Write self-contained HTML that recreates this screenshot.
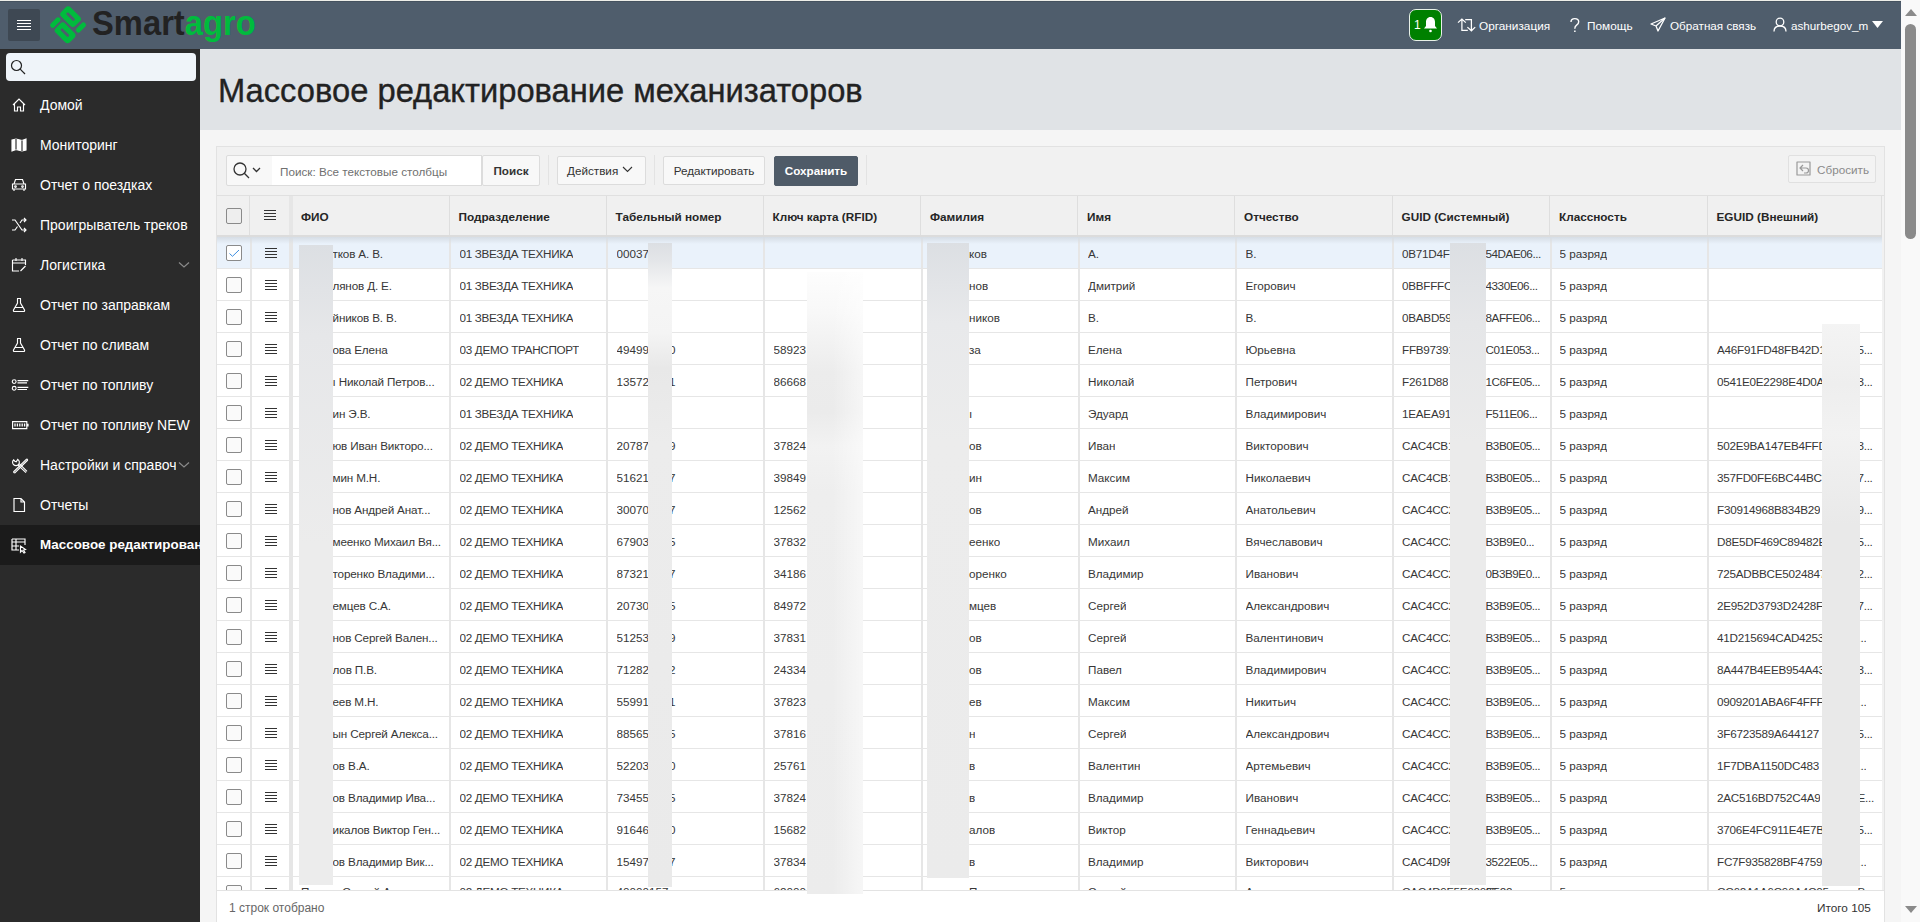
<!DOCTYPE html>
<html><head><meta charset="utf-8">
<style>
*{box-sizing:border-box}
html,body{margin:0;padding:0}
body{width:1920px;height:922px;overflow:hidden;position:relative;background:#f5f5f5;font-family:"Liberation Sans",sans-serif;color:#333}
.a{position:absolute}
.t{position:absolute;white-space:nowrap}
.nav{position:absolute;left:0;width:200px;height:40px;color:#fff;font-size:14px;line-height:40px}
.nav .lbl{position:absolute;left:40px;top:0;white-space:nowrap}
.nav svg{position:absolute;left:11px;top:12px}
.hd{position:absolute;top:196px;height:39px;background:#f0f0f0;border-right:1px solid #dedede;font-weight:bold;font-size:11.75px;color:#262626;line-height:42px}
.row{position:absolute;left:217px;width:1665px;height:32px;background:#fff}
.c{position:absolute;top:0;height:32px;line-height:33px;font-size:11.7px;color:#373737;white-space:nowrap;overflow:hidden}
.vl{position:absolute;top:0;width:2px;height:32px;background:#e6e6e6}
.hl{position:absolute;left:0;width:1665px;height:1px;background:#e6e6e6}
.cb{position:absolute;left:9px;top:8px;width:16px;height:16px;border:1px solid #8a8a8a;border-radius:2px;background:#fafafa}
.btn{position:absolute;top:156px;height:30px;border:1px solid #dcdcdc;border-radius:2px;background:#f8f8f8;font-size:11.7px;color:#333;line-height:28px;text-align:center;white-space:nowrap}
.red{position:absolute;background:#ebebeb}
</style></head><body>

<div class="a" style="left:0;top:0;width:1901px;height:1px;background:#eeeee9"></div>
<div class="a" style="left:0;top:1px;width:1901px;height:48px;background:#4f5d6c;border-top:1px solid #45525f"></div>
<div class="a" style="left:8px;top:9px;width:32px;height:32px;background:#3e4853;border-radius:2px"></div>
<div class="a" style="left:17px;top:20px;width:14px;height:1px;background:#fff"></div>
<div class="a" style="left:17px;top:23px;width:14px;height:1px;background:#fff"></div>
<div class="a" style="left:17px;top:26px;width:14px;height:1px;background:#fff"></div>
<div class="a" style="left:17px;top:29px;width:14px;height:1px;background:#fff"></div>
<svg class="a" style="left:0;top:0" width="100" height="50" viewBox="0 0 100 50">
<g transform="matrix(0.7071,0.7071,0.7071,-0.7071,46,4)" fill="#00bb3d" fill-rule="evenodd">
<path d="M20 1.8 L33 1.8 Q36.2 1.8 36.2 5 L36.2 11.8 Q36.2 15 33 15 L20 15 Q16.3 15 16.3 11.3 L16.3 5.5 Q16.3 1.8 20 1.8 Z M22.3 7 L30.4 7 Q31.6 7 31.6 8.2 L31.6 8.6 Q31.6 9.8 30.4 9.8 L22.3 9.8 Q21.1 9.8 21.1 8.6 L21.1 8.2 Q21.1 7 22.3 7 Z"/>
<path d="M27.3 -13.5 L40.3 -13.5 Q44 -13.5 44 -9.8 L44 -4 Q44 -0.3 40.3 -0.3 L27.3 -0.3 Q24 -0.3 24 -3.6 L24 -10.2 Q24 -13.5 27.3 -13.5 Z M29.5 -8.3 L37.7 -8.3 Q38.9 -8.3 38.9 -7.1 L38.9 -6.7 Q38.9 -5.5 37.7 -5.5 L29.5 -5.5 Q28.3 -5.5 28.3 -6.7 L28.3 -7.1 Q28.3 -8.3 29.5 -8.3 Z"/>
<rect x="17.2" y="-12.8" width="5" height="12.6" rx="2.5"/>
<rect x="38.8" y="2" width="5" height="12.2" rx="2.5"/>
</g></svg>
<div class="t" style="left:92px;top:3px;font-size:35px;font-weight:bold;line-height:40px;color:#222;transform:scaleX(0.935);transform-origin:0 0">Smart<span style="color:#00bb3d">agro</span></div>
<div class="a" style="left:1409px;top:9px;width:33px;height:32px;background:#008000;border:1px solid #e8f0e8;border-radius:7px"></div>
<div class="t" style="left:1414px;top:9px;font-size:12px;line-height:32px;color:#fff">1</div>
<svg class="a" style="left:1423px;top:16px" width="15" height="17" viewBox="0 0 15 17"><path d="M7.5 1 C4.5 1 3 3.5 3 6 L3 10 L1 12.5 L14 12.5 L12 10 L12 6 C12 3.5 10.5 1 7.5 1 Z" fill="#fff"/><circle cx="7.5" cy="15" r="1.3" fill="#fff"/></svg>
<svg class="a" style="left:1450px;top:14px" width="30" height="20" viewBox="1450 14 30 20"><g fill="none" stroke="#fff" stroke-width="1.25" stroke-linejoin="miter"><path d="M1458 22.6 L1461.9 19 L1465.8 22.6 M1461.9 19.3 L1461.9 30.3 L1467.8 30.3"/><path d="M1465.2 19.7 L1471.4 19.7 L1471.4 30.6 M1467.4 27.1 L1471.4 30.8 L1475.2 27.1"/></g></svg>
<div class="t" style="left:1479px;top:10px;font-size:11.8px;line-height:32px;color:#fff">Организация</div>
<svg class="a" style="left:1564px;top:12px" width="20" height="26" viewBox="1564 12 20 26"><g fill="none" stroke="#fff" stroke-width="1.4"><path d="M1571 22 Q1571 18.6 1574.8 18.6 Q1578.7 18.6 1578.7 21.8 Q1578.7 23.8 1576.6 25.2 Q1574.8 26.4 1574.8 28.7"/></g><rect x="1574.1" y="30.5" width="1.5" height="1.5" fill="#fff"/></svg>
<div class="t" style="left:1587px;top:10px;font-size:11.8px;line-height:32px;color:#fff">Помощь</div>
<svg class="a" style="left:1650px;top:17px" width="16" height="15" viewBox="0 0 16 15"><g fill="none" stroke="#fff" stroke-width="1.3" stroke-linejoin="round"><path d="M15 1 L1 7 L6 9 L8 14 Z"/><path d="M15 1 L6 9"/></g></svg>
<div class="t" style="left:1670px;top:10px;font-size:11.7px;line-height:32px;color:#fff">Обратная связь</div>
<svg class="a" style="left:1773px;top:17px" width="14" height="15" viewBox="0 0 14 15"><g fill="none" stroke="#fff" stroke-width="1.3"><circle cx="7" cy="5" r="3.8"/><path d="M1 14.5 C1 10.5 3.5 9 7 9 C10.5 9 13 10.5 13 14.5"/></g></svg>
<div class="t" style="left:1791px;top:10px;font-size:11.7px;line-height:32px;color:#fff">ashurbegov_m</div>
<svg class="a" style="left:1872px;top:21px" width="11" height="7" viewBox="0 0 11 7"><path d="M0 0 L11 0 L5.5 7 Z" fill="#fff"/></svg>
<div class="a" style="left:0;top:49px;width:200px;height:873px;background:#2b2b2b"></div>
<div class="a" style="left:6px;top:53px;width:190px;height:28px;background:#eff4f9;border-radius:4px"></div>
<svg class="a" style="left:10px;top:59px" width="17" height="17" viewBox="0 0 17 17"><g fill="none" stroke="#222" stroke-width="1.2"><circle cx="6.5" cy="6.5" r="5"/><path d="M10.2 10.2 L15 15"/></g></svg>
<div class="a" style="left:0;top:0;width:200px;height:922px;overflow:hidden">
<div class="nav" style="top:85px;"><svg width="19" height="17" viewBox="0 0 19 17"><g fill="none" stroke="#fff" stroke-width="1.15"><path d="M2 8 L8 2 L14 8 M3.5 6.5 L3.5 14 L6.5 14 L6.5 10 L9.5 10 L9.5 14 L12.5 14 L12.5 6.5"/></g></svg><div class="lbl" style="">Домой</div></div>
<div class="nav" style="top:125px;"><svg width="19" height="17" viewBox="0 0 19 17"><g fill="none" stroke="#fff" stroke-width="1.15"><path d="M1 3 L5 2 L11 3.5 L15 2 L15 13 L11 14 L5 12.5 L1 14 Z" fill="#fff"/><path d="M5 2 L5 12.5 M11 3.5 L11 14" stroke="#2b2b2b"/></g></svg><div class="lbl" style="">Мониторинг</div></div>
<div class="nav" style="top:165px;"><svg width="19" height="17" viewBox="0 0 19 17"><g fill="none" stroke="#fff" stroke-width="1.15"><path d="M3 7 L4.5 2.5 L11.5 2.5 L13 7 M1.5 7 L14.5 7 L14.5 12 L1.5 12 Z M3 12 L3 14 M13 12 L13 14"/><circle cx="4.5" cy="9.5" r="0.8"/><circle cx="11.5" cy="9.5" r="0.8"/></g></svg><div class="lbl" style="">Отчет о поездках</div></div>
<div class="nav" style="top:205px;"><svg width="19" height="17" viewBox="0 0 19 17"><g fill="none" stroke="#fff" stroke-width="1.15"><path d="M1 3 L4 3 L11 13 L15 13 M1 13 L4 13 L6.5 9.5 M9 6 L11 3 L15 3 M13 1 L15 3 L13 5 M13 11 L15 13 L13 15"/></g></svg><div class="lbl" style="">Проигрыватель треков</div></div>
<div class="nav" style="top:245px;"><svg width="19" height="17" viewBox="0 0 19 17"><g fill="none" stroke="#fff" stroke-width="1.15"><path d="M1.5 3 L14.5 3 L14.5 8 M1.5 3 L1.5 14 L8 14 M1.5 6 L14.5 6 M5 1 L5 4 M11 1 L11 4 M9.5 14 L14.5 9"/></g></svg><div class="lbl" style="">Логистика</div></div>
<div class="nav" style="top:285px;"><svg width="19" height="17" viewBox="0 0 19 17"><g fill="none" stroke="#fff" stroke-width="1.15"><path d="M6 1.5 L10 1.5 M6.5 1.5 L6.5 6 L2.5 13 Q2 14.5 3.5 14.5 L12.5 14.5 Q14 14.5 13.5 13 L9.5 6 L9.5 1.5 M4 10.5 L12 10.5"/></g></svg><div class="lbl" style="">Отчет по заправкам</div></div>
<div class="nav" style="top:325px;"><svg width="19" height="17" viewBox="0 0 19 17"><g fill="none" stroke="#fff" stroke-width="1.15"><path d="M6 1.5 L10 1.5 M6.5 1.5 L6.5 6 L2.5 13 Q2 14.5 3.5 14.5 L12.5 14.5 Q14 14.5 13.5 13 L9.5 6 L9.5 1.5 M4 10.5 L12 10.5"/></g></svg><div class="lbl" style="">Отчет по сливам</div></div>
<div class="nav" style="top:365px;"><svg width="19" height="17" viewBox="0 0 19 17"><g fill="none" stroke="#fff" stroke-width="1.15"><circle cx="3.2" cy="4.6" r="1.9"/><circle cx="3.2" cy="11.3" r="1.9"/><path d="M6.5 3.6 L17.3 3.6 M6.5 5.8 L16 5.8 M6.5 10.3 L17.3 10.3 M6.5 12.5 L16 12.5"/></g></svg><div class="lbl" style="">Отчет по топливу</div></div>
<div class="nav" style="top:405px;"><svg width="19" height="17" viewBox="0 0 19 17"><g fill="none" stroke="#fff" stroke-width="1.15"><path d="M1.6 4.6 L15.8 4.6 L15.8 11.6 L1.6 11.6 Z"/><path d="M16.8 6.8 L16.8 9.4" stroke-width="1.6"/><path d="M4 6.6 L4 9.6 M6.4 6.6 L6.4 9.6 M8.8 6.6 L8.8 9.6 M11.2 6.6 L11.2 9.6 M13.6 6.6 L13.6 9.6" stroke-width="1.3"/></g></svg><div class="lbl" style="">Отчет по топливу NEW</div></div>
<div class="nav" style="top:445px;"><svg width="19" height="17" viewBox="0 0 19 17"><g fill="none" stroke="#fff" stroke-width="1.15"><path d="M2.6 2.8 A3.4 3.4 0 1 0 6.8 2.4 L5.2 4.8 L3.8 4.2 Z"/><path d="M6.8 7.8 L15 15.6 M8.2 6.6 L16 14.4"/><path d="M15.8 1.8 L2.4 15 M16.8 3 L3.6 16.2 M15.8 1.8 L16.8 3 M2.4 15 L3.6 16.2"/></g></svg><div class="lbl" style="">Настройки и справочники</div></div>
<div class="nav" style="top:485px;"><svg width="19" height="17" viewBox="0 0 19 17"><g fill="none" stroke="#fff" stroke-width="1.15"><path d="M3 1.5 L10 1.5 L13.5 5 L13.5 14.5 L3 14.5 Z M10 1.5 L10 5 L13.5 5"/></g></svg><div class="lbl" style="">Отчеты</div></div>
<div class="nav" style="top:525px;background:#1b1b1b;"><svg width="19" height="17" viewBox="0 0 19 17"><g fill="none" stroke="#fff" stroke-width="1.15"><path d="M1 2 L14 2 L14 8 M1 2 L1 13 L8 13 M1 5 L14 5 M1 9 L8 9 M5 2 L5 13 M9.5 9 L9.5 15 L11 13.5 L13 16 L14 15.5 L12.5 13 L14.5 12.5 Z"/></g></svg><div class="lbl" style="font-weight:bold;font-size:13.4px;">Массовое редактирование механизаторов</div></div>
<div class="a" style="left:176px;top:445px;width:24px;height:40px;background:#2b2b2b"></div>
<svg class="a" style="left:178px;top:261px" width="12" height="8" viewBox="0 0 12 8"><path d="M1 1.5 L6 6 L11 1.5" fill="none" stroke="#8a8a8a" stroke-width="1.2"/></svg>
<svg class="a" style="left:178px;top:461px" width="12" height="8" viewBox="0 0 12 8"><path d="M1 1.5 L6 6 L11 1.5" fill="none" stroke="#8a8a8a" stroke-width="1.2"/></svg>
</div>
<div class="a" style="left:200px;top:49px;width:1701px;height:81px;background:#e0e3e6"></div>
<div class="t" style="left:218px;top:71px;font-size:32.7px;line-height:40px;color:#222;-webkit-text-stroke:0.35px #222">Массовое редактирование механизаторов</div>
<div class="a" style="left:216px;top:146px;width:1669px;height:800px;background:#f1f1f1;border:1px solid #e2e2e2"></div>
<div class="a" style="left:226px;top:155px;width:47px;height:31px;background:#f8f8f8;border:1px solid #dcdcdc;border-radius:2px 0 0 2px"></div>
<svg class="a" style="left:232px;top:161px" width="30" height="20" viewBox="0 0 30 20"><g fill="none" stroke="#333" stroke-width="1.3"><circle cx="8" cy="8" r="6"/><path d="M12.3 12.3 L17 17"/><path d="M21 7 L24.5 10.5 L28 7"/></g></svg>
<div class="a" style="left:272px;top:155px;width:210px;height:31px;background:#fff;border:1px solid #dcdcdc;border-left:none"></div>
<div class="t" style="left:280px;top:155px;font-size:11.7px;line-height:33px;color:#707070">Поиск: Все текстовые столбцы</div>
<div class="btn" style="left:482px;top:155px;width:58px;height:31px;font-weight:bold;line-height:30px">Поиск</div>
<div class="a" style="left:548px;top:155px;width:1px;height:30px;background:#e3e3e3"></div>
<div class="btn" style="left:557px;width:89px;height:29px"></div>
<div class="t" style="left:567px;top:156px;font-size:11.7px;line-height:30px;color:#333">Действия</div>
<svg class="a" style="left:622px;top:166px" width="11" height="7" viewBox="0 0 11 7"><path d="M1 1 L5.5 5.5 L10 1" fill="none" stroke="#333" stroke-width="1.1"/></svg>
<div class="a" style="left:654px;top:155px;width:1px;height:30px;background:#e3e3e3"></div>
<div class="btn" style="left:663px;width:102px;height:29px">Редактировать</div>
<div class="btn" style="left:774px;width:84px;height:30px;background:#4f5b68;border-color:#4f5b68;color:#fff;font-weight:bold">Сохранить</div>
<div class="a" style="left:866px;top:155px;width:1px;height:30px;background:#e3e3e3"></div>
<div class="btn" style="left:1788px;top:155px;width:88px;height:28px;color:#8a8a8a;border-color:#e0e0e0;background:#f3f3f3;padding-left:22px;line-height:27px">Сбросить</div>
<svg class="a" style="left:1796px;top:161px" width="16" height="15" viewBox="0 0 16 15"><g fill="none" stroke="#999" stroke-width="1.2"><path d="M1 1 L14 1 L14 14 L1 14 Z" stroke-linejoin="round"/><path d="M7 4 L4 7 L7 10 M4 7 L10 7 Q12.5 7 12.5 9.5 Q12.5 12 10 12 L8 12"/></g></svg>
<div class="a" style="left:217px;top:195px;width:1667px;height:1px;background:#e0e0e0"></div>
<div class="hd" style="left:217px;width:33px"></div>
<div class="cb" style="left:226px;top:208px;background:#eeeeee"></div>
<div class="hd" style="left:250px;width:40px"></div>
<div class="a" style="left:264px;top:210px;width:12px;height:1.3px;background:#333"></div>
<div class="a" style="left:264px;top:213px;width:12px;height:1.3px;background:#333"></div>
<div class="a" style="left:264px;top:216px;width:12px;height:1.3px;background:#333"></div>
<div class="a" style="left:264px;top:219px;width:12px;height:1.3px;background:#333"></div>
<div class="a" style="left:289px;top:196px;width:4px;height:39px;background:#e6e6e6"></div>
<div class="hd" style="left:293px;width:156.5px;padding-left:8px">ФИО</div>
<div class="hd" style="left:449.5px;width:157.0px;padding-left:9px">Подразделение</div>
<div class="hd" style="left:606.5px;width:157.0px;padding-left:9px">Табельный номер</div>
<div class="hd" style="left:763.5px;width:157.5px;padding-left:9px">Ключ карта (RFID)</div>
<div class="hd" style="left:921px;width:157px;padding-left:9px">Фамилия</div>
<div class="hd" style="left:1078px;width:157px;padding-left:9px">Имя</div>
<div class="hd" style="left:1235px;width:157.5px;padding-left:9px">Отчество</div>
<div class="hd" style="left:1392.5px;width:157.5px;padding-left:9px">GUID (Системный)</div>
<div class="hd" style="left:1550px;width:157.5px;padding-left:9px">Классность</div>
<div class="hd" style="left:1707.5px;width:174.5px;padding-left:9px">EGUID (Внешний)</div>
<div class="a" style="left:217px;top:235px;width:1665px;height:2px;background:#dcdcdc"></div>
<div class="row" style="top:237px;background:#eaf2fb">
<div class="cb" style="background:#fff"></div><svg class="a" style="left:11px;top:10px" width="12" height="12" viewBox="0 0 12 12"><path d="M1.5 6.5 L4.5 9.3 L11 3" fill="none" stroke="#3d8ee0" stroke-width="1"/></svg>
<div class="a" style="left:47.5px;top:10.6px;width:12px;height:1.2px;background:#333"></div>
<div class="a" style="left:47.5px;top:13.6px;width:12px;height:1.2px;background:#333"></div>
<div class="a" style="left:47.5px;top:16.6px;width:12px;height:1.2px;background:#333"></div>
<div class="a" style="left:47.5px;top:19.6px;width:12px;height:1.2px;background:#333"></div>
<div class="c" style="left:115.5px;letter-spacing:-0.15px">тков А. В.</div>
<div class="c" style="left:242.5px;letter-spacing:-0.3px">01 ЗВЕЗДА ТЕХНИКА</div>
<div class="c" style="left:399.5px;">00037</div>
<div class="c" style="left:556.5px;"></div>
<div class="c" style="left:752.0px;">ков</div>
<div class="c" style="left:871.0px;">А.</div>
<div class="c" style="left:1028.5px;">В.</div>
<div class="c" style="left:1185.0px;letter-spacing:-0.25px">0B71D4F</div>
<div class="c" style="left:1268.5px;letter-spacing:-0.45px">54DAE06...</div>
<div class="c" style="left:1342.5px;">5 разряд</div>
<div class="vl" style="left:33px"></div>
<div class="vl" style="left:72px;width:4px"></div>
<div class="vl" style="left:232.0px"></div>
<div class="vl" style="left:389.0px"></div>
<div class="vl" style="left:546.0px"></div>
<div class="vl" style="left:703.5px"></div>
<div class="vl" style="left:860.5px"></div>
<div class="vl" style="left:1017.5px"></div>
<div class="vl" style="left:1175.0px"></div>
<div class="vl" style="left:1332.5px"></div>
<div class="vl" style="left:1490.0px"></div>
<div class="hl" style="top:31px"></div>
</div>
<div class="row" style="top:269px;background:#fff">
<div class="cb"></div>
<div class="a" style="left:47.5px;top:10.6px;width:12px;height:1.2px;background:#333"></div>
<div class="a" style="left:47.5px;top:13.6px;width:12px;height:1.2px;background:#333"></div>
<div class="a" style="left:47.5px;top:16.6px;width:12px;height:1.2px;background:#333"></div>
<div class="a" style="left:47.5px;top:19.6px;width:12px;height:1.2px;background:#333"></div>
<div class="c" style="left:115.5px;letter-spacing:-0.15px">лянов Д. Е.</div>
<div class="c" style="left:242.5px;letter-spacing:-0.3px">01 ЗВЕЗДА ТЕХНИКА</div>
<div class="c" style="left:399.5px;"></div>
<div class="c" style="left:556.5px;"></div>
<div class="c" style="left:752.0px;">нов</div>
<div class="c" style="left:871.0px;">Дмитрий</div>
<div class="c" style="left:1028.5px;">Егорович</div>
<div class="c" style="left:1185.0px;letter-spacing:-0.25px">0BBFFFC1</div>
<div class="c" style="left:1268.5px;letter-spacing:-0.45px">4330E06...</div>
<div class="c" style="left:1342.5px;">5 разряд</div>
<div class="vl" style="left:33px"></div>
<div class="vl" style="left:72px;width:4px"></div>
<div class="vl" style="left:232.0px"></div>
<div class="vl" style="left:389.0px"></div>
<div class="vl" style="left:546.0px"></div>
<div class="vl" style="left:703.5px"></div>
<div class="vl" style="left:860.5px"></div>
<div class="vl" style="left:1017.5px"></div>
<div class="vl" style="left:1175.0px"></div>
<div class="vl" style="left:1332.5px"></div>
<div class="vl" style="left:1490.0px"></div>
<div class="hl" style="top:31px"></div>
</div>
<div class="row" style="top:301px;background:#fff">
<div class="cb"></div>
<div class="a" style="left:47.5px;top:10.6px;width:12px;height:1.2px;background:#333"></div>
<div class="a" style="left:47.5px;top:13.6px;width:12px;height:1.2px;background:#333"></div>
<div class="a" style="left:47.5px;top:16.6px;width:12px;height:1.2px;background:#333"></div>
<div class="a" style="left:47.5px;top:19.6px;width:12px;height:1.2px;background:#333"></div>
<div class="c" style="left:115.5px;letter-spacing:-0.15px">йников В. В.</div>
<div class="c" style="left:242.5px;letter-spacing:-0.3px">01 ЗВЕЗДА ТЕХНИКА</div>
<div class="c" style="left:399.5px;"></div>
<div class="c" style="left:556.5px;"></div>
<div class="c" style="left:752.0px;">ников</div>
<div class="c" style="left:871.0px;">В.</div>
<div class="c" style="left:1028.5px;">В.</div>
<div class="c" style="left:1185.0px;letter-spacing:-0.25px">0BABD59</div>
<div class="c" style="left:1268.5px;letter-spacing:-0.45px">8AFFE06...</div>
<div class="c" style="left:1342.5px;">5 разряд</div>
<div class="vl" style="left:33px"></div>
<div class="vl" style="left:72px;width:4px"></div>
<div class="vl" style="left:232.0px"></div>
<div class="vl" style="left:389.0px"></div>
<div class="vl" style="left:546.0px"></div>
<div class="vl" style="left:703.5px"></div>
<div class="vl" style="left:860.5px"></div>
<div class="vl" style="left:1017.5px"></div>
<div class="vl" style="left:1175.0px"></div>
<div class="vl" style="left:1332.5px"></div>
<div class="vl" style="left:1490.0px"></div>
<div class="hl" style="top:31px"></div>
</div>
<div class="row" style="top:333px;background:#fff">
<div class="cb"></div>
<div class="a" style="left:47.5px;top:10.6px;width:12px;height:1.2px;background:#333"></div>
<div class="a" style="left:47.5px;top:13.6px;width:12px;height:1.2px;background:#333"></div>
<div class="a" style="left:47.5px;top:16.6px;width:12px;height:1.2px;background:#333"></div>
<div class="a" style="left:47.5px;top:19.6px;width:12px;height:1.2px;background:#333"></div>
<div class="c" style="left:115.5px;letter-spacing:-0.15px">ова Елена</div>
<div class="c" style="left:242.5px;letter-spacing:-0.3px">03 ДЕМО ТРАНСПОРТ</div>
<div class="c" style="left:399.5px;">49499</div>
<div class="c" style="left:452.0px;">0</div>
<div class="c" style="left:556.5px;">58923</div>
<div class="c" style="left:752.0px;">за</div>
<div class="c" style="left:871.0px;">Елена</div>
<div class="c" style="left:1028.5px;">Юрьевна</div>
<div class="c" style="left:1185.0px;letter-spacing:-0.25px">FFB97391</div>
<div class="c" style="left:1268.5px;letter-spacing:-0.45px">C01E053...</div>
<div class="c" style="left:1342.5px;">5 разряд</div>
<div class="c" style="left:1500.0px;letter-spacing:-0.25px">A46F91FD48FB42D1</div>
<div class="c" style="left:1640.5px;letter-spacing:-0.3px">5...</div>
<div class="vl" style="left:33px"></div>
<div class="vl" style="left:72px;width:4px"></div>
<div class="vl" style="left:232.0px"></div>
<div class="vl" style="left:389.0px"></div>
<div class="vl" style="left:546.0px"></div>
<div class="vl" style="left:703.5px"></div>
<div class="vl" style="left:860.5px"></div>
<div class="vl" style="left:1017.5px"></div>
<div class="vl" style="left:1175.0px"></div>
<div class="vl" style="left:1332.5px"></div>
<div class="vl" style="left:1490.0px"></div>
<div class="hl" style="top:31px"></div>
</div>
<div class="row" style="top:365px;background:#fff">
<div class="cb"></div>
<div class="a" style="left:47.5px;top:10.6px;width:12px;height:1.2px;background:#333"></div>
<div class="a" style="left:47.5px;top:13.6px;width:12px;height:1.2px;background:#333"></div>
<div class="a" style="left:47.5px;top:16.6px;width:12px;height:1.2px;background:#333"></div>
<div class="a" style="left:47.5px;top:19.6px;width:12px;height:1.2px;background:#333"></div>
<div class="c" style="left:115.5px;letter-spacing:-0.15px">ı Николай Петров...</div>
<div class="c" style="left:242.5px;letter-spacing:-0.3px">02 ДЕМО ТЕХНИКА</div>
<div class="c" style="left:399.5px;">13572</div>
<div class="c" style="left:452.0px;">1</div>
<div class="c" style="left:556.5px;">86668</div>
<div class="c" style="left:752.0px;"></div>
<div class="c" style="left:871.0px;">Николай</div>
<div class="c" style="left:1028.5px;">Петрович</div>
<div class="c" style="left:1185.0px;letter-spacing:-0.25px">F261D88</div>
<div class="c" style="left:1268.5px;letter-spacing:-0.45px">1C6FE05...</div>
<div class="c" style="left:1342.5px;">5 разряд</div>
<div class="c" style="left:1500.0px;letter-spacing:-0.25px">0541E0E2298E4D0A</div>
<div class="c" style="left:1640.5px;letter-spacing:-0.3px">3...</div>
<div class="vl" style="left:33px"></div>
<div class="vl" style="left:72px;width:4px"></div>
<div class="vl" style="left:232.0px"></div>
<div class="vl" style="left:389.0px"></div>
<div class="vl" style="left:546.0px"></div>
<div class="vl" style="left:703.5px"></div>
<div class="vl" style="left:860.5px"></div>
<div class="vl" style="left:1017.5px"></div>
<div class="vl" style="left:1175.0px"></div>
<div class="vl" style="left:1332.5px"></div>
<div class="vl" style="left:1490.0px"></div>
<div class="hl" style="top:31px"></div>
</div>
<div class="row" style="top:397px;background:#fff">
<div class="cb"></div>
<div class="a" style="left:47.5px;top:10.6px;width:12px;height:1.2px;background:#333"></div>
<div class="a" style="left:47.5px;top:13.6px;width:12px;height:1.2px;background:#333"></div>
<div class="a" style="left:47.5px;top:16.6px;width:12px;height:1.2px;background:#333"></div>
<div class="a" style="left:47.5px;top:19.6px;width:12px;height:1.2px;background:#333"></div>
<div class="c" style="left:115.5px;letter-spacing:-0.15px">ин Э.В.</div>
<div class="c" style="left:242.5px;letter-spacing:-0.3px">01 ЗВЕЗДА ТЕХНИКА</div>
<div class="c" style="left:399.5px;"></div>
<div class="c" style="left:556.5px;"></div>
<div class="c" style="left:752.0px;">ı</div>
<div class="c" style="left:871.0px;">Эдуард</div>
<div class="c" style="left:1028.5px;">Владимирович</div>
<div class="c" style="left:1185.0px;letter-spacing:-0.25px">1EAEA91</div>
<div class="c" style="left:1268.5px;letter-spacing:-0.45px">F511E06...</div>
<div class="c" style="left:1342.5px;">5 разряд</div>
<div class="vl" style="left:33px"></div>
<div class="vl" style="left:72px;width:4px"></div>
<div class="vl" style="left:232.0px"></div>
<div class="vl" style="left:389.0px"></div>
<div class="vl" style="left:546.0px"></div>
<div class="vl" style="left:703.5px"></div>
<div class="vl" style="left:860.5px"></div>
<div class="vl" style="left:1017.5px"></div>
<div class="vl" style="left:1175.0px"></div>
<div class="vl" style="left:1332.5px"></div>
<div class="vl" style="left:1490.0px"></div>
<div class="hl" style="top:31px"></div>
</div>
<div class="row" style="top:429px;background:#fff">
<div class="cb"></div>
<div class="a" style="left:47.5px;top:10.6px;width:12px;height:1.2px;background:#333"></div>
<div class="a" style="left:47.5px;top:13.6px;width:12px;height:1.2px;background:#333"></div>
<div class="a" style="left:47.5px;top:16.6px;width:12px;height:1.2px;background:#333"></div>
<div class="a" style="left:47.5px;top:19.6px;width:12px;height:1.2px;background:#333"></div>
<div class="c" style="left:115.5px;letter-spacing:-0.15px">юв Иван Викторо...</div>
<div class="c" style="left:242.5px;letter-spacing:-0.3px">02 ДЕМО ТЕХНИКА</div>
<div class="c" style="left:399.5px;">20787</div>
<div class="c" style="left:452.0px;">9</div>
<div class="c" style="left:556.5px;">37824</div>
<div class="c" style="left:752.0px;">ов</div>
<div class="c" style="left:871.0px;">Иван</div>
<div class="c" style="left:1028.5px;">Викторович</div>
<div class="c" style="left:1185.0px;letter-spacing:-0.25px">CAC4CB1</div>
<div class="c" style="left:1268.5px;letter-spacing:-0.45px">B3B0E05...</div>
<div class="c" style="left:1342.5px;">5 разряд</div>
<div class="c" style="left:1500.0px;letter-spacing:-0.25px">502E9BA147EB4FFD</div>
<div class="c" style="left:1640.5px;letter-spacing:-0.3px">3...</div>
<div class="vl" style="left:33px"></div>
<div class="vl" style="left:72px;width:4px"></div>
<div class="vl" style="left:232.0px"></div>
<div class="vl" style="left:389.0px"></div>
<div class="vl" style="left:546.0px"></div>
<div class="vl" style="left:703.5px"></div>
<div class="vl" style="left:860.5px"></div>
<div class="vl" style="left:1017.5px"></div>
<div class="vl" style="left:1175.0px"></div>
<div class="vl" style="left:1332.5px"></div>
<div class="vl" style="left:1490.0px"></div>
<div class="hl" style="top:31px"></div>
</div>
<div class="row" style="top:461px;background:#fff">
<div class="cb"></div>
<div class="a" style="left:47.5px;top:10.6px;width:12px;height:1.2px;background:#333"></div>
<div class="a" style="left:47.5px;top:13.6px;width:12px;height:1.2px;background:#333"></div>
<div class="a" style="left:47.5px;top:16.6px;width:12px;height:1.2px;background:#333"></div>
<div class="a" style="left:47.5px;top:19.6px;width:12px;height:1.2px;background:#333"></div>
<div class="c" style="left:115.5px;letter-spacing:-0.15px">мин М.Н.</div>
<div class="c" style="left:242.5px;letter-spacing:-0.3px">02 ДЕМО ТЕХНИКА</div>
<div class="c" style="left:399.5px;">51621</div>
<div class="c" style="left:452.0px;">7</div>
<div class="c" style="left:556.5px;">39849</div>
<div class="c" style="left:752.0px;">ин</div>
<div class="c" style="left:871.0px;">Максим</div>
<div class="c" style="left:1028.5px;">Николаевич</div>
<div class="c" style="left:1185.0px;letter-spacing:-0.25px">CAC4CB1</div>
<div class="c" style="left:1268.5px;letter-spacing:-0.45px">B3B0E05...</div>
<div class="c" style="left:1342.5px;">5 разряд</div>
<div class="c" style="left:1500.0px;letter-spacing:-0.25px">357FD0FE6BC44BC9</div>
<div class="c" style="left:1640.5px;letter-spacing:-0.3px">7...</div>
<div class="vl" style="left:33px"></div>
<div class="vl" style="left:72px;width:4px"></div>
<div class="vl" style="left:232.0px"></div>
<div class="vl" style="left:389.0px"></div>
<div class="vl" style="left:546.0px"></div>
<div class="vl" style="left:703.5px"></div>
<div class="vl" style="left:860.5px"></div>
<div class="vl" style="left:1017.5px"></div>
<div class="vl" style="left:1175.0px"></div>
<div class="vl" style="left:1332.5px"></div>
<div class="vl" style="left:1490.0px"></div>
<div class="hl" style="top:31px"></div>
</div>
<div class="row" style="top:493px;background:#fff">
<div class="cb"></div>
<div class="a" style="left:47.5px;top:10.6px;width:12px;height:1.2px;background:#333"></div>
<div class="a" style="left:47.5px;top:13.6px;width:12px;height:1.2px;background:#333"></div>
<div class="a" style="left:47.5px;top:16.6px;width:12px;height:1.2px;background:#333"></div>
<div class="a" style="left:47.5px;top:19.6px;width:12px;height:1.2px;background:#333"></div>
<div class="c" style="left:115.5px;letter-spacing:-0.15px">нов Андрей Анат...</div>
<div class="c" style="left:242.5px;letter-spacing:-0.3px">02 ДЕМО ТЕХНИКА</div>
<div class="c" style="left:399.5px;">30070</div>
<div class="c" style="left:452.0px;">7</div>
<div class="c" style="left:556.5px;">12562</div>
<div class="c" style="left:752.0px;">ов</div>
<div class="c" style="left:871.0px;">Андрей</div>
<div class="c" style="left:1028.5px;">Анатольевич</div>
<div class="c" style="left:1185.0px;letter-spacing:-0.25px">CAC4CC2</div>
<div class="c" style="left:1268.5px;letter-spacing:-0.45px">B3B9E05...</div>
<div class="c" style="left:1342.5px;">5 разряд</div>
<div class="c" style="left:1500.0px;letter-spacing:-0.25px">F30914968B834B29</div>
<div class="c" style="left:1640.5px;letter-spacing:-0.3px">9...</div>
<div class="vl" style="left:33px"></div>
<div class="vl" style="left:72px;width:4px"></div>
<div class="vl" style="left:232.0px"></div>
<div class="vl" style="left:389.0px"></div>
<div class="vl" style="left:546.0px"></div>
<div class="vl" style="left:703.5px"></div>
<div class="vl" style="left:860.5px"></div>
<div class="vl" style="left:1017.5px"></div>
<div class="vl" style="left:1175.0px"></div>
<div class="vl" style="left:1332.5px"></div>
<div class="vl" style="left:1490.0px"></div>
<div class="hl" style="top:31px"></div>
</div>
<div class="row" style="top:525px;background:#fff">
<div class="cb"></div>
<div class="a" style="left:47.5px;top:10.6px;width:12px;height:1.2px;background:#333"></div>
<div class="a" style="left:47.5px;top:13.6px;width:12px;height:1.2px;background:#333"></div>
<div class="a" style="left:47.5px;top:16.6px;width:12px;height:1.2px;background:#333"></div>
<div class="a" style="left:47.5px;top:19.6px;width:12px;height:1.2px;background:#333"></div>
<div class="c" style="left:115.5px;letter-spacing:-0.15px">меенко Михаил Вя...</div>
<div class="c" style="left:242.5px;letter-spacing:-0.3px">02 ДЕМО ТЕХНИКА</div>
<div class="c" style="left:399.5px;">67903</div>
<div class="c" style="left:452.0px;">5</div>
<div class="c" style="left:556.5px;">37832</div>
<div class="c" style="left:752.0px;">еенко</div>
<div class="c" style="left:871.0px;">Михаил</div>
<div class="c" style="left:1028.5px;">Вячеславович</div>
<div class="c" style="left:1185.0px;letter-spacing:-0.25px">CAC4CC2</div>
<div class="c" style="left:1268.5px;letter-spacing:-0.45px">B3B9E0...</div>
<div class="c" style="left:1342.5px;">5 разряд</div>
<div class="c" style="left:1500.0px;letter-spacing:-0.25px">D8E5DF469C89482E</div>
<div class="c" style="left:1640.5px;letter-spacing:-0.3px">5...</div>
<div class="vl" style="left:33px"></div>
<div class="vl" style="left:72px;width:4px"></div>
<div class="vl" style="left:232.0px"></div>
<div class="vl" style="left:389.0px"></div>
<div class="vl" style="left:546.0px"></div>
<div class="vl" style="left:703.5px"></div>
<div class="vl" style="left:860.5px"></div>
<div class="vl" style="left:1017.5px"></div>
<div class="vl" style="left:1175.0px"></div>
<div class="vl" style="left:1332.5px"></div>
<div class="vl" style="left:1490.0px"></div>
<div class="hl" style="top:31px"></div>
</div>
<div class="row" style="top:557px;background:#fff">
<div class="cb"></div>
<div class="a" style="left:47.5px;top:10.6px;width:12px;height:1.2px;background:#333"></div>
<div class="a" style="left:47.5px;top:13.6px;width:12px;height:1.2px;background:#333"></div>
<div class="a" style="left:47.5px;top:16.6px;width:12px;height:1.2px;background:#333"></div>
<div class="a" style="left:47.5px;top:19.6px;width:12px;height:1.2px;background:#333"></div>
<div class="c" style="left:115.5px;letter-spacing:-0.15px">торенко Владими...</div>
<div class="c" style="left:242.5px;letter-spacing:-0.3px">02 ДЕМО ТЕХНИКА</div>
<div class="c" style="left:399.5px;">87321</div>
<div class="c" style="left:452.0px;">7</div>
<div class="c" style="left:556.5px;">34186</div>
<div class="c" style="left:752.0px;">оренко</div>
<div class="c" style="left:871.0px;">Владимир</div>
<div class="c" style="left:1028.5px;">Иванович</div>
<div class="c" style="left:1185.0px;letter-spacing:-0.25px">CAC4CC2</div>
<div class="c" style="left:1268.5px;letter-spacing:-0.45px">0B3B9E0...</div>
<div class="c" style="left:1342.5px;">5 разряд</div>
<div class="c" style="left:1500.0px;letter-spacing:-0.25px">725ADBBCE5024847</div>
<div class="c" style="left:1640.5px;letter-spacing:-0.3px">2...</div>
<div class="vl" style="left:33px"></div>
<div class="vl" style="left:72px;width:4px"></div>
<div class="vl" style="left:232.0px"></div>
<div class="vl" style="left:389.0px"></div>
<div class="vl" style="left:546.0px"></div>
<div class="vl" style="left:703.5px"></div>
<div class="vl" style="left:860.5px"></div>
<div class="vl" style="left:1017.5px"></div>
<div class="vl" style="left:1175.0px"></div>
<div class="vl" style="left:1332.5px"></div>
<div class="vl" style="left:1490.0px"></div>
<div class="hl" style="top:31px"></div>
</div>
<div class="row" style="top:589px;background:#fff">
<div class="cb"></div>
<div class="a" style="left:47.5px;top:10.6px;width:12px;height:1.2px;background:#333"></div>
<div class="a" style="left:47.5px;top:13.6px;width:12px;height:1.2px;background:#333"></div>
<div class="a" style="left:47.5px;top:16.6px;width:12px;height:1.2px;background:#333"></div>
<div class="a" style="left:47.5px;top:19.6px;width:12px;height:1.2px;background:#333"></div>
<div class="c" style="left:115.5px;letter-spacing:-0.15px">емцев С.А.</div>
<div class="c" style="left:242.5px;letter-spacing:-0.3px">02 ДЕМО ТЕХНИКА</div>
<div class="c" style="left:399.5px;">20730</div>
<div class="c" style="left:452.0px;">5</div>
<div class="c" style="left:556.5px;">84972</div>
<div class="c" style="left:752.0px;">мцев</div>
<div class="c" style="left:871.0px;">Сергей</div>
<div class="c" style="left:1028.5px;">Александрович</div>
<div class="c" style="left:1185.0px;letter-spacing:-0.25px">CAC4CC2</div>
<div class="c" style="left:1268.5px;letter-spacing:-0.45px">B3B9E05...</div>
<div class="c" style="left:1342.5px;">5 разряд</div>
<div class="c" style="left:1500.0px;letter-spacing:-0.25px">2E952D3793D2428F</div>
<div class="c" style="left:1640.5px;letter-spacing:-0.3px">7...</div>
<div class="vl" style="left:33px"></div>
<div class="vl" style="left:72px;width:4px"></div>
<div class="vl" style="left:232.0px"></div>
<div class="vl" style="left:389.0px"></div>
<div class="vl" style="left:546.0px"></div>
<div class="vl" style="left:703.5px"></div>
<div class="vl" style="left:860.5px"></div>
<div class="vl" style="left:1017.5px"></div>
<div class="vl" style="left:1175.0px"></div>
<div class="vl" style="left:1332.5px"></div>
<div class="vl" style="left:1490.0px"></div>
<div class="hl" style="top:31px"></div>
</div>
<div class="row" style="top:621px;background:#fff">
<div class="cb"></div>
<div class="a" style="left:47.5px;top:10.6px;width:12px;height:1.2px;background:#333"></div>
<div class="a" style="left:47.5px;top:13.6px;width:12px;height:1.2px;background:#333"></div>
<div class="a" style="left:47.5px;top:16.6px;width:12px;height:1.2px;background:#333"></div>
<div class="a" style="left:47.5px;top:19.6px;width:12px;height:1.2px;background:#333"></div>
<div class="c" style="left:115.5px;letter-spacing:-0.15px">нов Сергей Вален...</div>
<div class="c" style="left:242.5px;letter-spacing:-0.3px">02 ДЕМО ТЕХНИКА</div>
<div class="c" style="left:399.5px;">51253</div>
<div class="c" style="left:452.0px;">9</div>
<div class="c" style="left:556.5px;">37831</div>
<div class="c" style="left:752.0px;">ов</div>
<div class="c" style="left:871.0px;">Сергей</div>
<div class="c" style="left:1028.5px;">Валентинович</div>
<div class="c" style="left:1185.0px;letter-spacing:-0.25px">CAC4CC2</div>
<div class="c" style="left:1268.5px;letter-spacing:-0.45px">B3B9E05...</div>
<div class="c" style="left:1342.5px;">5 разряд</div>
<div class="c" style="left:1500.0px;letter-spacing:-0.25px">41D215694CAD4253</div>
<div class="c" style="left:1640.5px;letter-spacing:-0.3px">...</div>
<div class="vl" style="left:33px"></div>
<div class="vl" style="left:72px;width:4px"></div>
<div class="vl" style="left:232.0px"></div>
<div class="vl" style="left:389.0px"></div>
<div class="vl" style="left:546.0px"></div>
<div class="vl" style="left:703.5px"></div>
<div class="vl" style="left:860.5px"></div>
<div class="vl" style="left:1017.5px"></div>
<div class="vl" style="left:1175.0px"></div>
<div class="vl" style="left:1332.5px"></div>
<div class="vl" style="left:1490.0px"></div>
<div class="hl" style="top:31px"></div>
</div>
<div class="row" style="top:653px;background:#fff">
<div class="cb"></div>
<div class="a" style="left:47.5px;top:10.6px;width:12px;height:1.2px;background:#333"></div>
<div class="a" style="left:47.5px;top:13.6px;width:12px;height:1.2px;background:#333"></div>
<div class="a" style="left:47.5px;top:16.6px;width:12px;height:1.2px;background:#333"></div>
<div class="a" style="left:47.5px;top:19.6px;width:12px;height:1.2px;background:#333"></div>
<div class="c" style="left:115.5px;letter-spacing:-0.15px">лов П.В.</div>
<div class="c" style="left:242.5px;letter-spacing:-0.3px">02 ДЕМО ТЕХНИКА</div>
<div class="c" style="left:399.5px;">71282</div>
<div class="c" style="left:452.0px;">2</div>
<div class="c" style="left:556.5px;">24334</div>
<div class="c" style="left:752.0px;">ов</div>
<div class="c" style="left:871.0px;">Павел</div>
<div class="c" style="left:1028.5px;">Владимирович</div>
<div class="c" style="left:1185.0px;letter-spacing:-0.25px">CAC4CC2</div>
<div class="c" style="left:1268.5px;letter-spacing:-0.45px">B3B9E05...</div>
<div class="c" style="left:1342.5px;">5 разряд</div>
<div class="c" style="left:1500.0px;letter-spacing:-0.25px">8A447B4EEB954A43</div>
<div class="c" style="left:1640.5px;letter-spacing:-0.3px">3...</div>
<div class="vl" style="left:33px"></div>
<div class="vl" style="left:72px;width:4px"></div>
<div class="vl" style="left:232.0px"></div>
<div class="vl" style="left:389.0px"></div>
<div class="vl" style="left:546.0px"></div>
<div class="vl" style="left:703.5px"></div>
<div class="vl" style="left:860.5px"></div>
<div class="vl" style="left:1017.5px"></div>
<div class="vl" style="left:1175.0px"></div>
<div class="vl" style="left:1332.5px"></div>
<div class="vl" style="left:1490.0px"></div>
<div class="hl" style="top:31px"></div>
</div>
<div class="row" style="top:685px;background:#fff">
<div class="cb"></div>
<div class="a" style="left:47.5px;top:10.6px;width:12px;height:1.2px;background:#333"></div>
<div class="a" style="left:47.5px;top:13.6px;width:12px;height:1.2px;background:#333"></div>
<div class="a" style="left:47.5px;top:16.6px;width:12px;height:1.2px;background:#333"></div>
<div class="a" style="left:47.5px;top:19.6px;width:12px;height:1.2px;background:#333"></div>
<div class="c" style="left:115.5px;letter-spacing:-0.15px">еев М.Н.</div>
<div class="c" style="left:242.5px;letter-spacing:-0.3px">02 ДЕМО ТЕХНИКА</div>
<div class="c" style="left:399.5px;">55991</div>
<div class="c" style="left:452.0px;">1</div>
<div class="c" style="left:556.5px;">37823</div>
<div class="c" style="left:752.0px;">ев</div>
<div class="c" style="left:871.0px;">Максим</div>
<div class="c" style="left:1028.5px;">Никитьич</div>
<div class="c" style="left:1185.0px;letter-spacing:-0.25px">CAC4CC2</div>
<div class="c" style="left:1268.5px;letter-spacing:-0.45px">B3B9E05...</div>
<div class="c" style="left:1342.5px;">5 разряд</div>
<div class="c" style="left:1500.0px;letter-spacing:-0.25px">0909201ABA6F4FFF</div>
<div class="c" style="left:1640.5px;letter-spacing:-0.3px">...</div>
<div class="vl" style="left:33px"></div>
<div class="vl" style="left:72px;width:4px"></div>
<div class="vl" style="left:232.0px"></div>
<div class="vl" style="left:389.0px"></div>
<div class="vl" style="left:546.0px"></div>
<div class="vl" style="left:703.5px"></div>
<div class="vl" style="left:860.5px"></div>
<div class="vl" style="left:1017.5px"></div>
<div class="vl" style="left:1175.0px"></div>
<div class="vl" style="left:1332.5px"></div>
<div class="vl" style="left:1490.0px"></div>
<div class="hl" style="top:31px"></div>
</div>
<div class="row" style="top:717px;background:#fff">
<div class="cb"></div>
<div class="a" style="left:47.5px;top:10.6px;width:12px;height:1.2px;background:#333"></div>
<div class="a" style="left:47.5px;top:13.6px;width:12px;height:1.2px;background:#333"></div>
<div class="a" style="left:47.5px;top:16.6px;width:12px;height:1.2px;background:#333"></div>
<div class="a" style="left:47.5px;top:19.6px;width:12px;height:1.2px;background:#333"></div>
<div class="c" style="left:115.5px;letter-spacing:-0.15px">ын Сергей Алекса...</div>
<div class="c" style="left:242.5px;letter-spacing:-0.3px">02 ДЕМО ТЕХНИКА</div>
<div class="c" style="left:399.5px;">88565</div>
<div class="c" style="left:452.0px;">5</div>
<div class="c" style="left:556.5px;">37816</div>
<div class="c" style="left:752.0px;">н</div>
<div class="c" style="left:871.0px;">Сергей</div>
<div class="c" style="left:1028.5px;">Александрович</div>
<div class="c" style="left:1185.0px;letter-spacing:-0.25px">CAC4CC2</div>
<div class="c" style="left:1268.5px;letter-spacing:-0.45px">B3B9E05...</div>
<div class="c" style="left:1342.5px;">5 разряд</div>
<div class="c" style="left:1500.0px;letter-spacing:-0.25px">3F6723589A644127</div>
<div class="c" style="left:1640.5px;letter-spacing:-0.3px">5...</div>
<div class="vl" style="left:33px"></div>
<div class="vl" style="left:72px;width:4px"></div>
<div class="vl" style="left:232.0px"></div>
<div class="vl" style="left:389.0px"></div>
<div class="vl" style="left:546.0px"></div>
<div class="vl" style="left:703.5px"></div>
<div class="vl" style="left:860.5px"></div>
<div class="vl" style="left:1017.5px"></div>
<div class="vl" style="left:1175.0px"></div>
<div class="vl" style="left:1332.5px"></div>
<div class="vl" style="left:1490.0px"></div>
<div class="hl" style="top:31px"></div>
</div>
<div class="row" style="top:749px;background:#fff">
<div class="cb"></div>
<div class="a" style="left:47.5px;top:10.6px;width:12px;height:1.2px;background:#333"></div>
<div class="a" style="left:47.5px;top:13.6px;width:12px;height:1.2px;background:#333"></div>
<div class="a" style="left:47.5px;top:16.6px;width:12px;height:1.2px;background:#333"></div>
<div class="a" style="left:47.5px;top:19.6px;width:12px;height:1.2px;background:#333"></div>
<div class="c" style="left:115.5px;letter-spacing:-0.15px">ов В.А.</div>
<div class="c" style="left:242.5px;letter-spacing:-0.3px">02 ДЕМО ТЕХНИКА</div>
<div class="c" style="left:399.5px;">52203</div>
<div class="c" style="left:452.0px;">0</div>
<div class="c" style="left:556.5px;">25761</div>
<div class="c" style="left:752.0px;">в</div>
<div class="c" style="left:871.0px;">Валентин</div>
<div class="c" style="left:1028.5px;">Артемьевич</div>
<div class="c" style="left:1185.0px;letter-spacing:-0.25px">CAC4CC2</div>
<div class="c" style="left:1268.5px;letter-spacing:-0.45px">B3B9E05...</div>
<div class="c" style="left:1342.5px;">5 разряд</div>
<div class="c" style="left:1500.0px;letter-spacing:-0.25px">1F7DBA1150DC483</div>
<div class="c" style="left:1640.5px;letter-spacing:-0.3px">...</div>
<div class="vl" style="left:33px"></div>
<div class="vl" style="left:72px;width:4px"></div>
<div class="vl" style="left:232.0px"></div>
<div class="vl" style="left:389.0px"></div>
<div class="vl" style="left:546.0px"></div>
<div class="vl" style="left:703.5px"></div>
<div class="vl" style="left:860.5px"></div>
<div class="vl" style="left:1017.5px"></div>
<div class="vl" style="left:1175.0px"></div>
<div class="vl" style="left:1332.5px"></div>
<div class="vl" style="left:1490.0px"></div>
<div class="hl" style="top:31px"></div>
</div>
<div class="row" style="top:781px;background:#fff">
<div class="cb"></div>
<div class="a" style="left:47.5px;top:10.6px;width:12px;height:1.2px;background:#333"></div>
<div class="a" style="left:47.5px;top:13.6px;width:12px;height:1.2px;background:#333"></div>
<div class="a" style="left:47.5px;top:16.6px;width:12px;height:1.2px;background:#333"></div>
<div class="a" style="left:47.5px;top:19.6px;width:12px;height:1.2px;background:#333"></div>
<div class="c" style="left:115.5px;letter-spacing:-0.15px">ов Владимир Ива...</div>
<div class="c" style="left:242.5px;letter-spacing:-0.3px">02 ДЕМО ТЕХНИКА</div>
<div class="c" style="left:399.5px;">73455</div>
<div class="c" style="left:452.0px;">5</div>
<div class="c" style="left:556.5px;">37824</div>
<div class="c" style="left:752.0px;">в</div>
<div class="c" style="left:871.0px;">Владимир</div>
<div class="c" style="left:1028.5px;">Иванович</div>
<div class="c" style="left:1185.0px;letter-spacing:-0.25px">CAC4CC2</div>
<div class="c" style="left:1268.5px;letter-spacing:-0.45px">B3B9E05...</div>
<div class="c" style="left:1342.5px;">5 разряд</div>
<div class="c" style="left:1500.0px;letter-spacing:-0.25px">2AC516BD752C4A9</div>
<div class="c" style="left:1640.5px;letter-spacing:-0.3px">E...</div>
<div class="vl" style="left:33px"></div>
<div class="vl" style="left:72px;width:4px"></div>
<div class="vl" style="left:232.0px"></div>
<div class="vl" style="left:389.0px"></div>
<div class="vl" style="left:546.0px"></div>
<div class="vl" style="left:703.5px"></div>
<div class="vl" style="left:860.5px"></div>
<div class="vl" style="left:1017.5px"></div>
<div class="vl" style="left:1175.0px"></div>
<div class="vl" style="left:1332.5px"></div>
<div class="vl" style="left:1490.0px"></div>
<div class="hl" style="top:31px"></div>
</div>
<div class="row" style="top:813px;background:#fff">
<div class="cb"></div>
<div class="a" style="left:47.5px;top:10.6px;width:12px;height:1.2px;background:#333"></div>
<div class="a" style="left:47.5px;top:13.6px;width:12px;height:1.2px;background:#333"></div>
<div class="a" style="left:47.5px;top:16.6px;width:12px;height:1.2px;background:#333"></div>
<div class="a" style="left:47.5px;top:19.6px;width:12px;height:1.2px;background:#333"></div>
<div class="c" style="left:115.5px;letter-spacing:-0.15px">икалов Виктор Ген...</div>
<div class="c" style="left:242.5px;letter-spacing:-0.3px">02 ДЕМО ТЕХНИКА</div>
<div class="c" style="left:399.5px;">91646</div>
<div class="c" style="left:452.0px;">0</div>
<div class="c" style="left:556.5px;">15682</div>
<div class="c" style="left:752.0px;">алов</div>
<div class="c" style="left:871.0px;">Виктор</div>
<div class="c" style="left:1028.5px;">Геннадьевич</div>
<div class="c" style="left:1185.0px;letter-spacing:-0.25px">CAC4CC2</div>
<div class="c" style="left:1268.5px;letter-spacing:-0.45px">B3B9E05...</div>
<div class="c" style="left:1342.5px;">5 разряд</div>
<div class="c" style="left:1500.0px;letter-spacing:-0.25px">3706E4FC911E4E7B</div>
<div class="c" style="left:1640.5px;letter-spacing:-0.3px">5...</div>
<div class="vl" style="left:33px"></div>
<div class="vl" style="left:72px;width:4px"></div>
<div class="vl" style="left:232.0px"></div>
<div class="vl" style="left:389.0px"></div>
<div class="vl" style="left:546.0px"></div>
<div class="vl" style="left:703.5px"></div>
<div class="vl" style="left:860.5px"></div>
<div class="vl" style="left:1017.5px"></div>
<div class="vl" style="left:1175.0px"></div>
<div class="vl" style="left:1332.5px"></div>
<div class="vl" style="left:1490.0px"></div>
<div class="hl" style="top:31px"></div>
</div>
<div class="row" style="top:845px;background:#fff">
<div class="cb"></div>
<div class="a" style="left:47.5px;top:10.6px;width:12px;height:1.2px;background:#333"></div>
<div class="a" style="left:47.5px;top:13.6px;width:12px;height:1.2px;background:#333"></div>
<div class="a" style="left:47.5px;top:16.6px;width:12px;height:1.2px;background:#333"></div>
<div class="a" style="left:47.5px;top:19.6px;width:12px;height:1.2px;background:#333"></div>
<div class="c" style="left:115.5px;letter-spacing:-0.15px">ов Владимир Вик...</div>
<div class="c" style="left:242.5px;letter-spacing:-0.3px">02 ДЕМО ТЕХНИКА</div>
<div class="c" style="left:399.5px;">15497</div>
<div class="c" style="left:452.0px;">7</div>
<div class="c" style="left:556.5px;">37834</div>
<div class="c" style="left:752.0px;">в</div>
<div class="c" style="left:871.0px;">Владимир</div>
<div class="c" style="left:1028.5px;">Викторович</div>
<div class="c" style="left:1185.0px;letter-spacing:-0.25px">CAC4D9F</div>
<div class="c" style="left:1268.5px;letter-spacing:-0.45px">3522E05...</div>
<div class="c" style="left:1342.5px;">5 разряд</div>
<div class="c" style="left:1500.0px;letter-spacing:-0.25px">FC7F935828BF4759</div>
<div class="c" style="left:1640.5px;letter-spacing:-0.3px">...</div>
<div class="vl" style="left:33px"></div>
<div class="vl" style="left:72px;width:4px"></div>
<div class="vl" style="left:232.0px"></div>
<div class="vl" style="left:389.0px"></div>
<div class="vl" style="left:546.0px"></div>
<div class="vl" style="left:703.5px"></div>
<div class="vl" style="left:860.5px"></div>
<div class="vl" style="left:1017.5px"></div>
<div class="vl" style="left:1175.0px"></div>
<div class="vl" style="left:1332.5px"></div>
<div class="vl" style="left:1490.0px"></div>
<div class="hl" style="top:31px"></div>
</div>
<div class="row" style="top:877px;background:#fff">
<div class="cb"></div>
<div class="a" style="left:47.5px;top:10.6px;width:12px;height:1.2px;background:#333"></div>
<div class="a" style="left:47.5px;top:13.6px;width:12px;height:1.2px;background:#333"></div>
<div class="a" style="left:47.5px;top:16.6px;width:12px;height:1.2px;background:#333"></div>
<div class="a" style="left:47.5px;top:19.6px;width:12px;height:1.2px;background:#333"></div>
<div class="c" style="left:84.0px;line-height:30px;letter-spacing:-0.15px">Петров Сергей А...</div>
<div class="c" style="left:242.5px;line-height:30px;letter-spacing:-0.3px">02 ДЕМО ТЕХНИКА</div>
<div class="c" style="left:399.5px;line-height:30px;">40000157</div>
<div class="c" style="left:556.5px;line-height:30px;">62000</div>
<div class="c" style="left:752.0px;line-height:30px;">П</div>
<div class="c" style="left:871.0px;line-height:30px;">Сергей</div>
<div class="c" style="left:1028.5px;line-height:30px;">Алексеевич</div>
<div class="c" style="left:1185.0px;line-height:30px;letter-spacing:-0.25px">CAC4D9F5E600E522</div>
<div class="c" style="left:1268.5px;line-height:30px;letter-spacing:-0.45px">05...</div>
<div class="c" style="left:1342.5px;line-height:30px;">5 разряд</div>
<div class="c" style="left:1500.0px;line-height:30px;letter-spacing:-0.25px">CC62A1A6C96A4C05</div>
<div class="c" style="left:1640.5px;line-height:30px;letter-spacing:-0.3px">B...</div>
<div class="vl" style="left:33px"></div>
<div class="vl" style="left:72px;width:4px"></div>
<div class="vl" style="left:232.0px"></div>
<div class="vl" style="left:389.0px"></div>
<div class="vl" style="left:546.0px"></div>
<div class="vl" style="left:703.5px"></div>
<div class="vl" style="left:860.5px"></div>
<div class="vl" style="left:1017.5px"></div>
<div class="vl" style="left:1175.0px"></div>
<div class="vl" style="left:1332.5px"></div>
<div class="vl" style="left:1490.0px"></div>
<div class="hl" style="top:31px"></div>
</div>
<div class="a" style="left:217px;top:237px;width:1665px;height:7px;background:linear-gradient(#d6dde5,rgba(214,221,229,0))"></div>
<div class="a" style="left:217px;top:890px;width:1667px;height:32px;background:#fff;border-top:1px solid #e3e3e3"></div>
<div class="t" style="left:229px;top:892px;font-size:12px;line-height:32px;color:#666">1 строк отобрано</div>
<div class="t" style="left:1817px;top:892px;font-size:11.8px;line-height:32px;color:#333">Итого 105</div>
<div class="red" style="left:299px;top:245px;width:34px;height:640px;background:linear-gradient(#dcdfe3 0px,#e6e7e9 90px,#ececec 300px,#ececec 100%)"></div>
<div class="red" style="left:648px;top:243px;width:24px;height:644px;background:linear-gradient(#dcdfe3 0px,#e4e6e9 18px,#f6f6f6 45px,#f4f4f4 90px,#e8e8e8 125px,#ececec 200px,#eaeaea 100%)"></div>
<div class="red" style="left:807px;top:272px;width:56px;height:622px;background:linear-gradient(90deg,rgba(255,255,255,0) 0%,rgba(255,255,255,0) 45%,rgba(255,255,255,0.55) 100%),linear-gradient(#fdfdfd 0px,#f8f8f8 40px,#ececec 100px,#ebebeb 140px,#f2f2f2 175px,#eeeeee 220px,#ececec 100%)"></div>
<div class="red" style="left:927px;top:243px;width:42px;height:635px;background:linear-gradient(#dcdfe3 0px,#e8e9eb 80px,#ececec 200px,#ebebeb 100%)"></div>
<div class="red" style="left:1450px;top:243px;width:36px;height:642px;background:linear-gradient(#dcdfe3 0px,#e5e6e8 80px,#ebebeb 200px,#ebebeb 100%)"></div>
<div class="red" style="left:1822px;top:324px;width:38px;height:562px;background:linear-gradient(#f4f4f4 0px,#eeeeee 60px,#f2f2f2 110px,#e9e9e9 200px,#e9e9e9 100%)"></div>
<div class="a" style="left:1901px;top:0;width:19px;height:922px;background:#f9f9f9"></div>
<svg class="a" style="left:1905px;top:9px" width="12" height="7" viewBox="0 0 12 7"><path d="M0 7 L6 0 L12 7 Z" fill="#8a8a8a"/></svg>
<div class="a" style="left:1905px;top:24px;width:11px;height:215px;background:#8a8a8a;border-radius:6px"></div>
<svg class="a" style="left:1905px;top:906px" width="12" height="7" viewBox="0 0 12 7"><path d="M0 0 L6 7 L12 0 Z" fill="#8a8a8a"/></svg>
</body></html>
